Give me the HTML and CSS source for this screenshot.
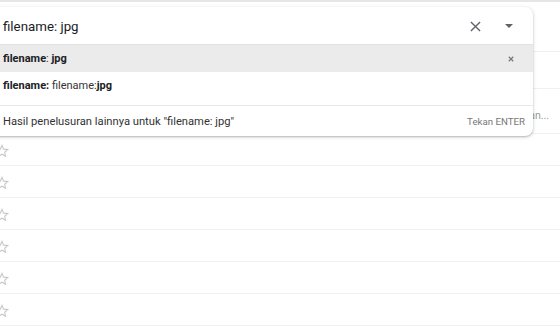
FILE: index.html
```html
<!DOCTYPE html>
<html lang="id">

<head>
    <meta charset="UTF-8">
    <title>Gmail - pencarian</title>
    <link rel="stylesheet" href="styles.css">
</head>

<body>
    <div class="mail_list">
        <div class="head_row"></div>
        <div class="row row_a"></div>
        <div class="row row_b"></div>
        <div class="row row_c"><span class="snip">an...</span></div>
        <div class="row mail"><svg class="star" viewBox="0 0 24 24"><path d="M12 3.6l2.5 5.6 6.1.6-4.6 4.1 1.3 6-5.3-3.1-5.3 3.1 1.3-6-4.6-4.1 6.1-.6z"/></svg></div>
        <div class="row mail"><svg class="star" viewBox="0 0 24 24"><path d="M12 3.6l2.5 5.6 6.1.6-4.6 4.1 1.3 6-5.3-3.1-5.3 3.1 1.3-6-4.6-4.1 6.1-.6z"/></svg></div>
        <div class="row mail"><svg class="star" viewBox="0 0 24 24"><path d="M12 3.6l2.5 5.6 6.1.6-4.6 4.1 1.3 6-5.3-3.1-5.3 3.1 1.3-6-4.6-4.1 6.1-.6z"/></svg></div>
        <div class="row mail"><svg class="star" viewBox="0 0 24 24"><path d="M12 3.6l2.5 5.6 6.1.6-4.6 4.1 1.3 6-5.3-3.1-5.3 3.1 1.3-6-4.6-4.1 6.1-.6z"/></svg></div>
        <div class="row mail"><svg class="star" viewBox="0 0 24 24"><path d="M12 3.6l2.5 5.6 6.1.6-4.6 4.1 1.3 6-5.3-3.1-5.3 3.1 1.3-6-4.6-4.1 6.1-.6z"/></svg></div>
        <div class="row mail"><svg class="star" viewBox="0 0 24 24"><path d="M12 3.6l2.5 5.6 6.1.6-4.6 4.1 1.3 6-5.3-3.1-5.3 3.1 1.3-6-4.6-4.1 6.1-.6z"/></svg></div>
    </div>

    <!-- kotak saran pencarian -->
    <div class="search_box">
        <div class="search_top">
            <span class="query">filename: jpg</span>
            <svg class="ic_close" viewBox="0 0 12 12"><path d="M1 1l10 10M11 1L1 11"/></svg>
            <svg class="ic_drop" viewBox="0 0 10 5"><path d="M0 0h10L5 5z"/></svg>
        </div>
        <div class="sugg">
            <div class="sugg_item active">
                <span><b>filename</b>: <b>jpg</b></span>
                <svg class="ic_rm" viewBox="0 0 8 8"><path d="M1 1l6 6M7 1L1 7"/></svg>
            </div>
            <div class="sugg_item">
                <span><b>filename:</b> filename:<b>jpg</b></span>
            </div>
        </div>
        <div class="more">
            <span>Hasil penelusuran lainnya untuk "filename: jpg"</span>
            <span class="hint">Tekan ENTER</span>
        </div>
    </div>
</body>

</html>
```

FILE: styles.css
```css
* {
    margin: 0;
    padding: 0;
    box-sizing: border-box;
}

body {
    width: 560px;
    height: 336px;
    overflow: hidden;
    background: #fff;
    font-family: Roboto, "Noto Sans", "Liberation Sans", sans-serif;
    position: relative;
}

.head_row {
    height: 2px;
    background: #e6e6e6;
}

.row {
    border-bottom: 1px solid #f0f0f0;
    display: flex;
    align-items: center;
}

.row_a {
    height: 50px;
}

.row_b {
    height: 37px;
}

.row_c {
    height: 45px;
    justify-content: flex-end;
}

.snip {
    font-size: 10.5px;
    color: #9a9a9a;
    margin-right: 11px;
    padding-top: 8px;
}

.mail {
    height: 32px;
}

.star {
    width: 16px;
    height: 16px;
    margin-left: -6px;
    margin-top: 3px;
    fill: none;
    stroke: #c6c6c6;
    stroke-width: 1.6;
}

.search_box {
    position: absolute;
    top: 7px;
    left: -10px;
    right: 27px;
    background: #fff;
    border-radius: 8px;
    box-shadow: 0 1px 2px rgba(60, 64, 67, 0.3), 0 1px 4px rgba(60, 64, 67, 0.15);
    color: #202124;
}

.search_top {
    height: 38px;
    display: flex;
    align-items: center;
    padding-left: 13px;
    border-bottom: 1px solid #e2e2e2;
}

.query {
    flex: 1;
    font-size: 13.3px;
    padding-top: 2px;
}

.ic_close {
    width: 11px;
    height: 11px;
    stroke: #5f6368;
    stroke-width: 1.5;
    margin-right: 24px;
    margin-top: 2px;
}

.ic_drop {
    width: 8px;
    height: 4px;
    fill: #5f6368;
    margin-right: 20px;
    margin-top: 1px;
}

.sugg {
    padding-bottom: 6px;
    border-bottom: 1px solid #e8e8e8;
}

.sugg_item {
    height: 27px;
    display: flex;
    align-items: center;
    justify-content: space-between;
    padding-left: 13px;
    padding-right: 19px;
    font-size: 11px;
    color: #333;
}

.sugg_item b {
    font-weight: 700;
    color: #202124;
}

.sugg_item.active {
    background: #ebebeb;
}

.ic_rm {
    width: 6px;
    height: 6px;
    stroke: #777;
    stroke-width: 1.6;
}

.more {
    height: 30px;
    display: flex;
    align-items: center;
    justify-content: space-between;
    padding-left: 13px;
    padding-right: 8px;
    font-size: 11.2px;
    color: #333;
}

.hint {
    font-size: 9.7px;
    color: #777;
}
```
